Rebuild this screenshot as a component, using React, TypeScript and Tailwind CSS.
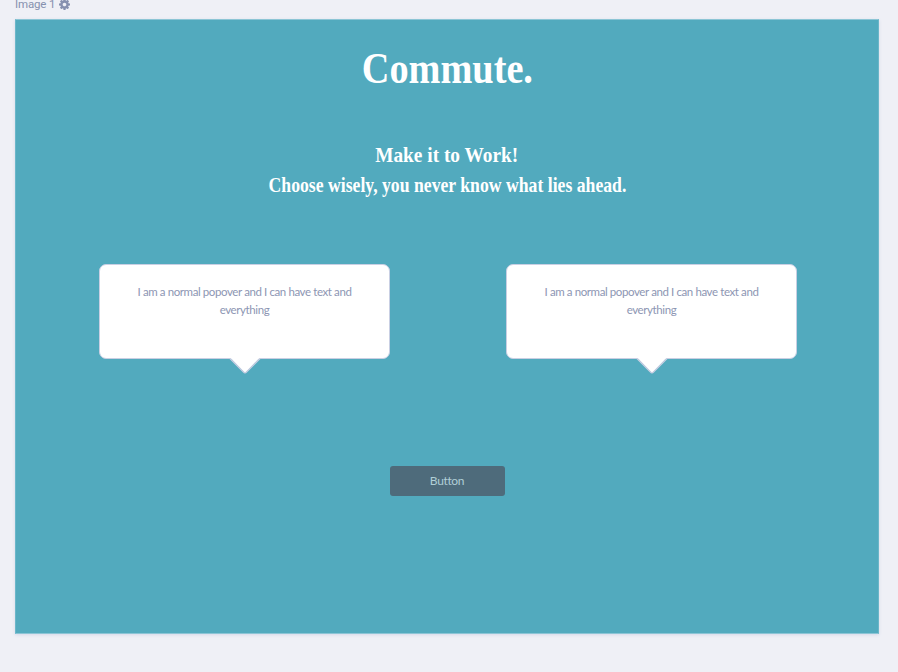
import type { ReactNode } from 'react';

function GearIcon() {
  return (
    <svg viewBox="0 128 1536 1536" className="h-[11px] w-[11px] fill-current">
      <path d="M1024 896q0-106-75-181t-181-75-181 75-75 181 75 181 181 75 181-75 75-181zm512-109v222q0 12-8 23t-20 13l-185 28q-19 54-39 91 35 50 107 138 10 12 10 25t-9 23q-27 37-99 108t-94 71q-12 0-26-9l-138-108q-44 23-91 38-16 136-29 186-7 28-36 28h-222q-14 0-24.5-8.5t-11.5-21.5l-28-184q-49-16-90-37l-141 107q-10 9-25 9-14 0-25-11-126-114-165-168-7-10-7-23 0-12 8-23 15-21 51-66.5t54-70.5q-27-50-41-99l-183-27q-13-2-21-12.5t-8-23.5v-222q0-12 8-23t19-13l186-28q14-46 39-92-40-57-107-138-10-12-10-24 0-10 9-23 26-36 98.5-107.5t94.5-71.5q13 0 26 10l138 107q44-23 91-38 16-136 29-186 7-28 36-28h222q14 0 24.5 8.5t11.5 21.5l28 184q49 16 90 37l142-107q9-9 24-9 13 0 25 10 129 119 165 170 7 8 7 22 0 12-8 23-15 21-51 66.5t-54 70.5q26 50 41 98l183 28q13 2 21 12.5t8 23.5z" />
    </svg>
  );
}

function Popover({ children }: { children: ReactNode }) {
  return (
    <div className="relative h-[95px] w-[291px] rounded-[7px] border border-[#c9cfe3] bg-white px-8 pt-[18px] text-center font-['Lato',sans-serif] text-[11.5px] leading-[17.5px] tracking-[-0.4px] text-[#8d96b3]">
      {children}
      <svg viewBox="0 0 32 17" className="absolute left-[129px] top-[92px] h-[17px] w-8">
        <path d="M0 0H32L30 1.5 17.5 14.5Q16 16 14.5 14.5L2 1.5Z" fill="white" />
        <path d="M1 1.5L14.5 15Q16 16.5 17.5 15L31 1.5" fill="none" stroke="#c9cfe3" strokeWidth="1.4" />
      </svg>
    </div>
  );
}

export default function App() {
  return (
    <div className="h-[672px] w-[898px] overflow-hidden bg-[#eff0f6] pl-[15px]">
      <div className="flex h-[19px] items-start gap-[4px] text-[#8690af]">
        <span className="h-[12px] whitespace-nowrap font-['Roboto',sans-serif] text-[11.5px] leading-[9px] tracking-[-0.15px]">Image 1</span>
        <span className="-mt-px"><GearIcon /></span>
      </div>
      <main className="flex h-[615px] w-[864px] flex-col items-center border border-x-[#6bb6c9] border-y-[#8cc5d5] bg-[#52aabe] shadow-[0_1px_3px_#d5d8e8]">
        <h1 className="mt-[23px] h-[52px] origin-center scale-x-[.87] whitespace-nowrap font-['Liberation_Serif',serif] text-[44px] font-bold leading-[52px] text-white">
          Commute.
        </h1>
        <div className="mt-[45px] flex flex-col items-center whitespace-nowrap font-['Liberation_Serif',serif] text-[21px] font-bold leading-[30px] text-white">
          <p className="scale-x-[.92]">Make it to Work!</p>
          <p className="scale-x-[.842]">Choose wisely, you never know what lies ahead.</p>
        </div>
        <div className="mt-[64px] flex gap-[116px] pl-[2px]">
          <Popover>I am a normal popover and I can have text and everything</Popover>
          <Popover>I am a normal popover and I can have text and everything</Popover>
        </div>
        <button className="mt-[107px] h-[30px] w-[115px] rounded-[3px] bg-[#4e6b7b] font-['Lato',sans-serif] text-[12px] tracking-[-0.35px] text-[#b0cfd7]">
          Button
        </button>
      </main>
    </div>
  );
}
